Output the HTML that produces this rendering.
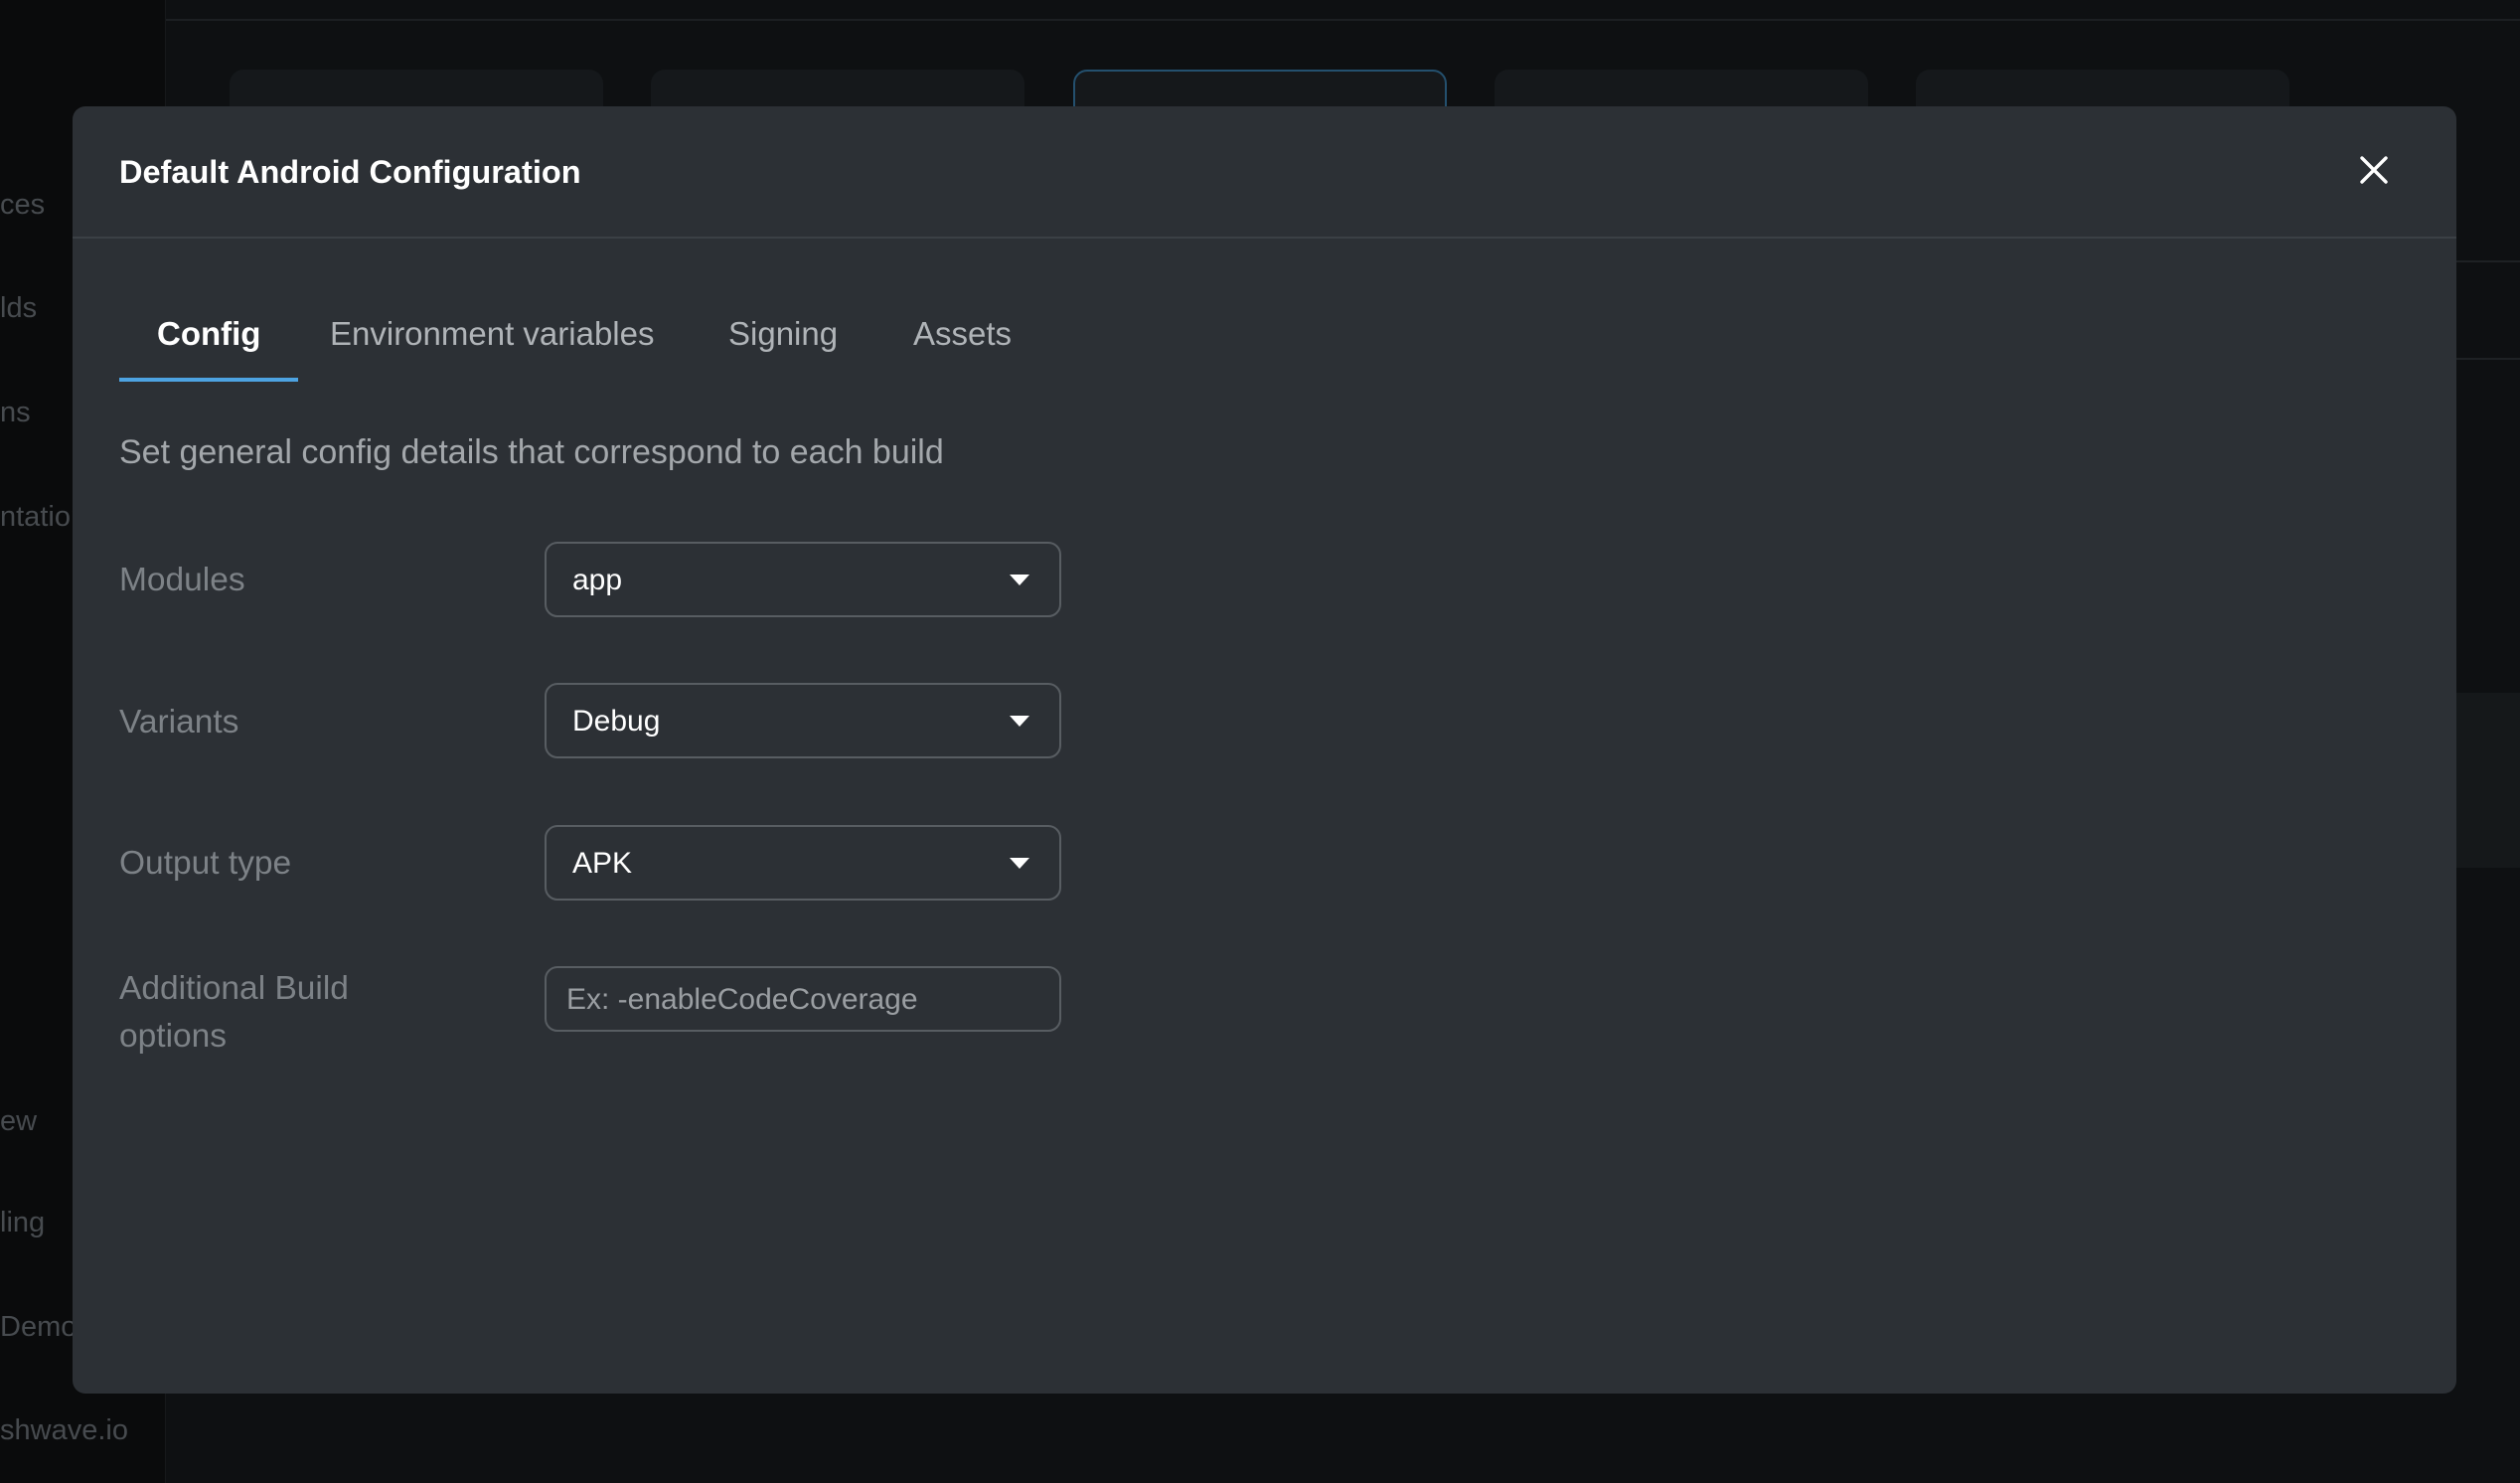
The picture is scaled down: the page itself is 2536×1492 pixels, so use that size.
<!DOCTYPE html>
<html><head><meta charset="utf-8"><style>
*{margin:0;padding:0;box-sizing:border-box}
body{width:2536px;height:1492px;background:#0e1012;position:relative;overflow:hidden;font-family:"Liberation Sans",sans-serif}
.abs{position:absolute}
.side{left:0;top:0;width:167px;height:1492px;background:#0a0b0c;border-right:1px solid #16181a}
.st{position:absolute;left:0;color:#474b4f;font-size:29px;white-space:nowrap}
.card{position:absolute;top:70px;height:120px;background:#15181b;border-radius:14px;width:376px}
.modal{left:73px;top:107px;width:2399px;height:1295px;background:#2c3035;border-radius:13px}
.title{left:47px;top:48px;color:#fff;font-size:32.5px;font-weight:bold}
.div{left:0;top:131px;width:100%;height:2px;background:#3b4045}
.tab{top:210px;font-size:33px;color:#b0b4b8}
.lbl{left:47px;font-size:33.5px;color:#7d8287;line-height:48px}
.sel{left:475px;width:520px;height:76px;border:2px solid #585d62;border-radius:13px;color:#fff;font-size:30px;padding-left:26px;line-height:74px}
.sel svg{position:absolute;right:30px;top:31px}
</style></head><body>
<div class="abs side">
<div class="st" style="top:190px">ces</div>
<div class="st" style="top:294px">lds</div>
<div class="st" style="top:399px">ns</div>
<div class="st" style="top:504px">ntation</div>
<div class="st" style="top:1112px">ew</div>
<div class="st" style="top:1214px">ling</div>
<div class="st" style="top:1319px">Demo</div>
<div class="st" style="top:1423px">shwave.io</div>
</div>
<div class="abs" style="left:167px;top:19px;width:2369px;height:2px;background:#1c1f22"></div>
<div class="card" style="left:231px"></div>
<div class="card" style="left:655px"></div>
<div class="card" style="left:1080px;border:2px solid #24506e"></div>
<div class="card" style="left:1504px"></div>
<div class="card" style="left:1928px"></div>
<div class="abs" style="left:2472px;top:262px;width:64px;height:2px;background:#1e2124"></div>
<div class="abs" style="left:2472px;top:360px;width:64px;height:2px;background:#1e2124"></div>
<div class="abs" style="left:2472px;top:697px;width:64px;height:176px;background:#15181a"></div>

<div class="abs modal">
<div class="abs title">Default Android Configuration</div>
<svg class="abs" style="left:2302px;top:50px" width="28" height="28" viewBox="0 0 28 28"><path d="M2 2L26 26M26 2L2 26" stroke="#fff" stroke-width="3.4" stroke-linecap="round"/></svg>
<div class="abs div"></div>
<div class="abs tab" style="left:85px;color:#fff;font-weight:bold">Config</div>
<div class="abs tab" style="left:259px">Environment variables</div>
<div class="abs tab" style="left:660px">Signing</div>
<div class="abs tab" style="left:846px">Assets</div>
<div class="abs" style="left:47px;top:273px;width:180px;height:4px;background:#4da3e2"></div>
<div class="abs" style="left:47px;top:329px;font-size:34px;color:#a3a7ab">Set general config details that correspond to each build</div>

<div class="abs lbl" style="top:453px">Modules</div>
<div class="abs sel" style="top:438px">app<svg width="20" height="11"><path d="M0 0H20L10 11Z" fill="#fff"/></svg></div>
<div class="abs lbl" style="top:596px">Variants</div>
<div class="abs sel" style="top:580px">Debug<svg width="20" height="11"><path d="M0 0H20L10 11Z" fill="#fff"/></svg></div>
<div class="abs lbl" style="top:738px">Output type</div>
<div class="abs sel" style="top:723px">APK<svg width="20" height="11"><path d="M0 0H20L10 11Z" fill="#fff"/></svg></div>
<div class="abs lbl" style="top:864px">Additional Build<br>options</div>
<div class="abs sel" style="top:865px;height:66px;line-height:64px;color:#9a9ea2;padding-left:20px">Ex: -enableCodeCoverage</div>
</div>
</body></html>
